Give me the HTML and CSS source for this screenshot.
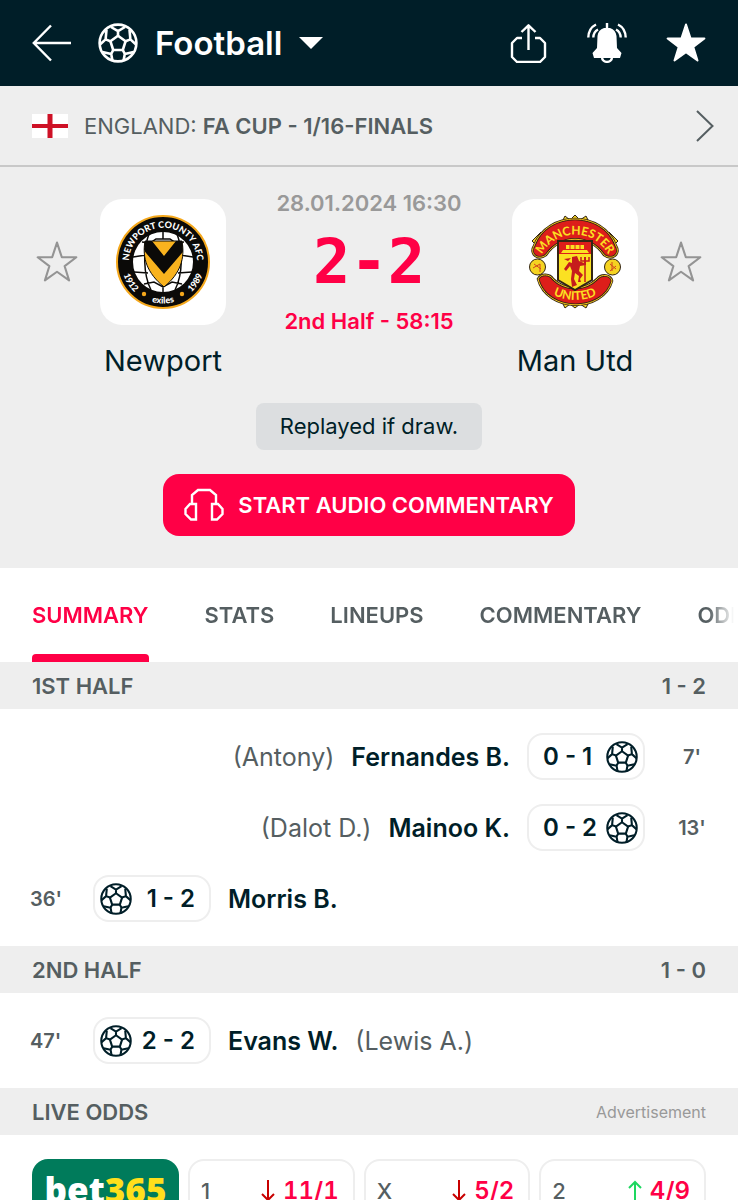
FILE: index.html
```html
<!DOCTYPE html>
<html lang="en">
<head>
<meta charset="utf-8">
<meta name="viewport" content="width=device-width, initial-scale=1">
<title>Newport - Man Utd</title>
<link rel="stylesheet" href="styles.css">
</head>
<body>
<svg class="sprite" aria-hidden="true">
  <symbol id="ball" viewBox="0 0 40 40">
    <g fill="none" stroke="currentColor" stroke-width="2.6" stroke-linejoin="round">
      <circle cx="20" cy="20" r="18.4"/>
      <path d="M20 12.800 27.600 18.200 24.800 27H15.200L12.400 18.200Z"/>
      <path d="M20 12.800V8.200M13 4 20 8.200 27 4M27.600 18.200 32.400 16.400M31.500 7 32.400 16.400 38 21.500M24.800 27 26.800 31M35.500 29 26.800 31 25.500 38M15.200 27 13.200 31M4.500 29 13.200 31 14.500 38M12.400 18.200 7.600 16.400M8.500 7 7.600 16.400 2 21.500"/>
    </g>
  </symbol>
  <symbol id="star" viewBox="0 0 40 40">
    <path d="M20 1.500 24.600 15.500H38.400L27.300 24 31.500 37.500 20 29.300 8.500 37.500 12.700 24 1.600 15.500H15.400Z"/>
  </symbol>
</svg>

<header class="topbar">
  <button class="icon-btn" aria-label="Back">
    <svg width="40" height="40" viewBox="0 0 40 40" fill="none" stroke="currentColor" stroke-width="2.400"><path d="M39 20H2M19 2.500 1.800 20 19 37.500"/></svg>
  </button>
  <button class="sport"><svg class="sport-ball"><use href="#ball"/></svg><span>Football</span><svg width="24" height="12" viewBox="0 0 24 12" fill="currentColor"><path d="M0 0H24L12 12Z"/></svg></button>
  <div class="actions">
    <button class="icon-btn" aria-label="Share">
      <svg width="40" height="40" viewBox="0 0 40 40" fill="none" stroke="currentColor" stroke-width="2.400" stroke-linejoin="round"><path d="M14 15H9L4 20V34L9 39H32L37 34V20L32 15H27M20.500 27V2.500M13.500 9 20.500 2.300 27.500 9"/></svg>
    </button>
    <button class="icon-btn" aria-label="Notifications">
      <svg width="40" height="40" viewBox="0 0 40 40" fill="none" stroke="currentColor" stroke-width="2.400"><path d="M20 0V7M15 34C15 40.500 25 40.500 25 34"/><path fill="currentColor" stroke="none" d="M17 5H23C27 6.500 29 9 29.500 13L30 25 34.500 30 33 35H7L5.500 30 10 25 10.500 13C11 9 13 6.500 17 5Z"/><path d="M9 1.500C4 4 1.500 8 1.300 14.500M11 6.500C8 8 6.500 10.500 6.300 14.500M31 1.500C36 4 38.500 8 38.700 14.500M29 6.500C32 8 33.500 10.500 33.700 14.500"/></svg>
    </button>
    <button class="icon-btn" aria-label="Favourite match"><svg class="star-on"><use href="#star"/></svg></button>
  </div>
</header>

<a class="league" href="#league">
  <svg width="36" height="24" viewBox="0 0 36 24"><path fill="#fff" d="M0 0H36V24H0Z"/><path fill="#ce1126" d="M15.500 0H20.500V24H15.500ZM0 10H36V14H0Z"/></svg>
  <span class="league-name">ENGLAND: <b>FA CUP - 1/16-FINALS</b></span>
  <svg width="18" height="32" viewBox="0 0 18 32" fill="none" stroke="currentColor" stroke-width="2"><path d="M1 1 16.500 16 1 31"/></svg>
</a>

<main>
<section class="match">
  <div class="board">
    <button class="fav" aria-label="Favourite Newport"><svg class="star-off"><use href="#star"/></svg></button>
    <a class="team" href="#newport">
      <span class="crest">
        <svg width="94" height="94" viewBox="0 0 94 94">
          <defs>
            <path id="n-top" d="M19 66A34 34 0 1 1 75 66"/>
            <path id="n-bot" d="M5.500 47A41.500 41.500 0 0 0 88.500 47"/>
            <clipPath id="n-shield"><path d="M29 26H66C69 43 65 58 48 72 31 58 26 43 29 26Z"/></clipPath>
          </defs>
          <circle cx="47" cy="47" r="46" fill="#0b0a08" stroke="#f5a81c" stroke-width="2"/>
          <circle cx="47" cy="47" r="30" fill="#fff"/>
          <path d="M33 19C27 35 27 59 35 75M61 19C67 35 67 59 59 75M17 42 30 40M64 40 77 42M18 57 32 58M62 58 76 57M26 27 34 28 40 24H54L60 28 68 27M28 69 38 67 47 72 56 67 66 69M47 17V24M47 70V77" stroke="#0b0a08" stroke-width="1.500" fill="none"/>
          <path d="M29 26H66C69 43 65 58 48 72 31 58 26 43 29 26Z" fill="#f9b31e"/>
          <path clip-path="url(#n-shield)" d="M22 26H36L48 41 60 26H74L66 38 48 59 30 38Z" fill="#0b0a08"/>
          <path d="M29 26H66C69 43 65 58 48 72 31 58 26 43 29 26Z" fill="none" stroke="#0b0a08"/>
          <g class="newport-text">
            <text><textPath href="#n-top" startOffset="50%" text-anchor="middle">NEWPORT COUNTY AFC</textPath></text>
            <text><textPath href="#n-bot" startOffset="18%" text-anchor="middle">1912</textPath></text>
            <text><textPath href="#n-bot" startOffset="50%" text-anchor="middle">exiles</textPath></text>
            <text><textPath href="#n-bot" startOffset="82%" text-anchor="middle">1989</textPath></text>
          </g>
          <circle cx="28" cy="79" r="2.200" fill="#f5a81c"/><circle cx="66" cy="79" r="2.200" fill="#f5a81c"/>
        </svg>
      </span>
      <span class="team-name">Newport</span>
    </a>
    <div class="result">
      <time class="date">28.01.2024 16:30</time>
      <strong class="score">2-2</strong>
      <span class="stage">2nd Half - 58:15</span>
    </div>
    <a class="team" href="#manutd">
      <span class="crest">
        <svg width="94" height="94" viewBox="0 0 94 94">
          <defs>
            <path id="m-top" d="M14 39C29 13 65 13 80 39"/>
            <path id="m-bot" d="M15 73C33 89 61 89 79 73"/>
          </defs>
          <g fill="#f5d321" stroke="#332514">
            <path d="M34 7 37 1 42 5 47 0 52 5 58 1 61 7ZM4 26 13 17 16 21 8 30ZM90 26 81 17 78 21 86 30ZM34 87 37 93 42 89 47 93 52 89 58 93 61 87Z"/>
            <circle cx="9.500" cy="52" r="8"/><circle cx="84.500" cy="52" r="8"/>
          </g>
          <path d="M6 49 13 54M5 53 12 49 12 57M82 49 88 54M82 56 88 51M84 47V56" stroke="#d2451e" fill="none"/>
          <path d="M6 31C19-5 75-5 88 31 93 39 84 46 76 40 62 19 32 19 18 40 10 46 1 39 6 31Z" fill="#dd1e1a" stroke="#332514" stroke-width="2.600"/>
          <path d="M6 31C19-5 75-5 88 31 93 39 84 46 76 40 62 19 32 19 18 40 10 46 1 39 6 31Z" fill="none" stroke="#f3c51f"/>
          <path d="M10 64C13 58 22 59 25 64 37 76 57 76 69 64 74 58 83 60 84 66 75 98 19 98 10 64Z" fill="#dd1e1a" stroke="#332514" stroke-width="2.600"/>
          <path d="M10 64C13 58 22 59 25 64 37 76 57 76 69 64 74 58 83 60 84 66 75 98 19 98 10 64Z" fill="none" stroke="#f3c51f"/>
          <path d="M30 26H64V65L47 75 30 65Z" fill="#fbe122" stroke="#332514" stroke-width="2"/>
          <path d="M31 27H63V39H31Z" fill="#dd1e1a"/>
          <path d="M35 35H59L61 38H33ZM38 30H56V34H38Z" fill="#fbe122"/><path d="M42 29V34M47 29V34M52 29V34" stroke="#dd1e1a"/>
          <path d="M44 42 49 41 51 46 56 48V42H58V50L52 51 51 56 55 60 52 64 53 67H50L51 61 47 58 46 64 49 70 44 72 43 64 44 56 42 51 38 56 36 54 41 47 44 48ZM36 44 43 43 40 46Z" fill="#c61c1c"/>
          <path d="M57 42V67M53 42V46H61V42" stroke="#c61c1c" stroke-width="1.500" fill="none"/>
          <g class="united-text">
            <text><textPath href="#m-top" startOffset="50%" text-anchor="middle">MANCHESTER</textPath></text>
            <text><textPath href="#m-bot" startOffset="50%" text-anchor="middle">UNITED</textPath></text>
          </g>
        </svg>
      </span>
      <span class="team-name">Man Utd</span>
    </a>
    <button class="fav" aria-label="Favourite Man Utd"><svg class="star-off"><use href="#star"/></svg></button>
  </div>
  <p class="note">Replayed if draw.</p>
  <button class="audio">
    <svg width="40" height="34" viewBox="0 0 40 34" fill="none" stroke="currentColor" stroke-width="2.400"><path d="M8 16V7L14 2H26L32 7V16M12 16V31.500H7L1.500 26V21L6 16ZM28 16V31.500H33L38.500 26V21L34 16Z"/></svg>
    START AUDIO COMMENTARY
  </button>
</section>

<nav class="tabs">
  <a class="tab active" href="#summary">SUMMARY</a>
  <a class="tab" href="#stats">STATS</a>
  <a class="tab" href="#lineups">LINEUPS</a>
  <a class="tab" href="#commentary">COMMENTARY</a>
  <a class="tab" href="#odds">ODDS</a>
</nav>

<h2 class="section"><span>1ST HALF</span><span>1 - 2</span></h2>
<ul class="events">
  <li class="event away"><span class="minute">7'</span><span class="goal"><svg class="ball"><use href="#ball"/></svg><span>0 - 1</span></span><b>Fernandes B.</b><span class="assist">(Antony)</span></li>
  <li class="event away"><span class="minute">13'</span><span class="goal"><svg class="ball"><use href="#ball"/></svg><span>0 - 2</span></span><b>Mainoo K.</b><span class="assist">(Dalot D.)</span></li>
  <li class="event"><span class="minute">36'</span><span class="goal"><svg class="ball"><use href="#ball"/></svg><span>1 - 2</span></span><b>Morris B.</b></li>
</ul>
<h2 class="section"><span>2ND HALF</span><span>1 - 0</span></h2>
<ul class="events">
  <li class="event"><span class="minute">47'</span><span class="goal"><svg class="ball"><use href="#ball"/></svg><span>2 - 2</span></span><b>Evans W.</b><span class="assist">(Lewis A.)</span></li>
</ul>
<h2 class="section"><span>LIVE ODDS</span><small>Advertisement</small></h2>
<div class="odds">
  <a class="bookie" href="#bet365">bet<span>365</span></a>
  <button class="odd"><span>1</span><svg class="down" viewBox="0 0 14 22"><path d="M7 0V20M1 14 7 20 13 14"/></svg><b>11/1</b></button>
  <button class="odd"><span>X</span><svg class="down" viewBox="0 0 14 22"><path d="M7 0V20M1 14 7 20 13 14"/></svg><b>5/2</b></button>
  <button class="odd"><span>2</span><svg class="up" viewBox="0 0 14 22"><path d="M7 22V2M1 8 7 2 13 8"/></svg><b>4/9</b></button>
</div>
</main>
</body>
</html>
```
FILE: styles.css
```css
* { box-sizing: border-box; }
body {
  margin: 0;
  background: #fff;
  color: #001e28;
  font-family: Inter, "Liberation Sans", sans-serif;
  font-size: 22px;
  line-height: 28px;
}
button { padding: 0; border: 0; background: none; color: inherit; font: inherit; cursor: pointer; }
a { color: inherit; text-decoration: none; }
svg { display: block; flex: none; }
b { font-weight: 600; }
.sprite { position: absolute; width: 0; height: 0; }

.topbar { display: flex; align-items: center; height: 86px; padding: 0 32px; background: #001e28; color: #fff; }
.sport { display: flex; align-items: center; gap: 17px; margin-left: 26px; font-size: 33px; font-weight: 600; }
.sport-ball { width: 40px; height: 40px; }
.actions { display: flex; gap: 39px; margin-left: auto; }
.star-on { width: 40px; height: 40px; fill: #fff; stroke: #fff; stroke-width: 2; stroke-linejoin: round; }

.league { display: flex; align-items: center; gap: 16px; height: 81px; padding: 0 24px 0 32px; background: #eee; border-bottom: 2px solid #c8c8c8; color: #555e61; }
.league-name { flex: 1; }

.match { display: flex; flex-direction: column; align-items: center; padding: 32px 36px; background: #eee; }
.board { display: flex; align-self: stretch; align-items: flex-start; }
.fav { margin-top: 42px; }
.star-off { width: 42px; height: 42px; fill: none; stroke: #949494; stroke-width: 2; stroke-linejoin: round; }
.team { display: flex; flex-direction: column; align-items: center; width: 126px; margin: 0 22px; }
.crest { display: grid; place-items: center; width: 126px; height: 126px; border-radius: 22px; background: #fff; }
.team-name { margin-top: 20px; font-size: 29px; line-height: 32px; white-space: nowrap; }
.newport-text { fill: #fff; font: 900 9px Lato, sans-serif; }
.united-text { fill: #fbe122; font: 700 12px Lato, sans-serif; }
.result { display: flex; flex: 1; flex-direction: column; align-items: center; margin-top: -10px; color: #ff0046; white-space: nowrap; }
.date { color: #999; font-weight: 600; }
.score { margin: 12px 0; font: 700 62px/66px "DejaVu Sans Mono", monospace; }
.stage { font-weight: 600; }
.note { margin: 26px 0 24px; padding: 9px 24px 10px; border-radius: 8px; background: #dcdee0; }
.audio { display: flex; align-items: center; gap: 14px; padding: 14px 21px; border-radius: 16px; background: #ff0046; color: #fff; font-weight: 600; }

.tabs { display: flex; gap: 56px; height: 94px; padding-left: 32px; overflow: hidden; color: #555e61; font-weight: 600; mask-image: linear-gradient(to right, #000 calc(100% - 30px), transparent calc(100% - 4px)); }
.tab { display: flex; flex: none; align-items: center; }
.active { position: relative; color: #ff0046; }
.active::after { content: ""; position: absolute; inset: auto 0 0; height: 8px; border-radius: 4px 4px 0 0; background: #ff0046; }

.section { display: flex; align-items: center; justify-content: space-between; margin: 0; padding: 10px 32px 9px; background: #eee; color: #555e61; font-size: 22px; font-weight: 600; }
.section small { color: #999; font-size: 16px; font-weight: 400; }
.events { display: flex; flex-direction: column; gap: 24px; margin: 0; padding: 24px 0; list-style: none; }
.event { display: flex; align-items: center; gap: 17px; padding-left: 30px; font-size: 25px; }
.away { flex-direction: row-reverse; padding: 0 16px; }
.minute { width: 46px; color: #555e61; font-size: 20px; font-weight: 600; }
.away .minute { width: 60px; text-align: center; }
.goal { display: flex; align-items: center; justify-content: space-between; width: 118px; height: 47px; padding: 0 14px 0 5px; border: 2px solid #eee; border-radius: 16px; font-size: 24px; font-weight: 600; white-space: nowrap; }
.away .goal { flex-direction: row-reverse; padding: 0 5px 0 14px; }
.ball { width: 32px; height: 32px; }
.assist { color: #555e61; }

.odds { display: flex; gap: 9px; padding: 24px 32px; }
.bookie { width: 147px; height: 64px; border-radius: 16px; background: #007b5b; color: #fff; font: 800 35px/62px "Open Sans", sans-serif; text-align: center; }
.bookie span { color: #ffdf1b; }
.odd { display: flex; flex: 1; align-items: center; height: 64px; padding: 0 14px 0 11px; border: 2px solid #eee; border-radius: 16px; }
.odd span { margin-right: auto; color: #555e61; font-weight: 500; }
.odd b { margin-left: 8px; color: #ff0046; font-size: 24px; font-variant-numeric: tabular-nums; }
.odd svg { width: 14px; height: 22px; fill: none; stroke-width: 2; }
.down { stroke: #c80000; }
.up { stroke: #1ed760; }
```
